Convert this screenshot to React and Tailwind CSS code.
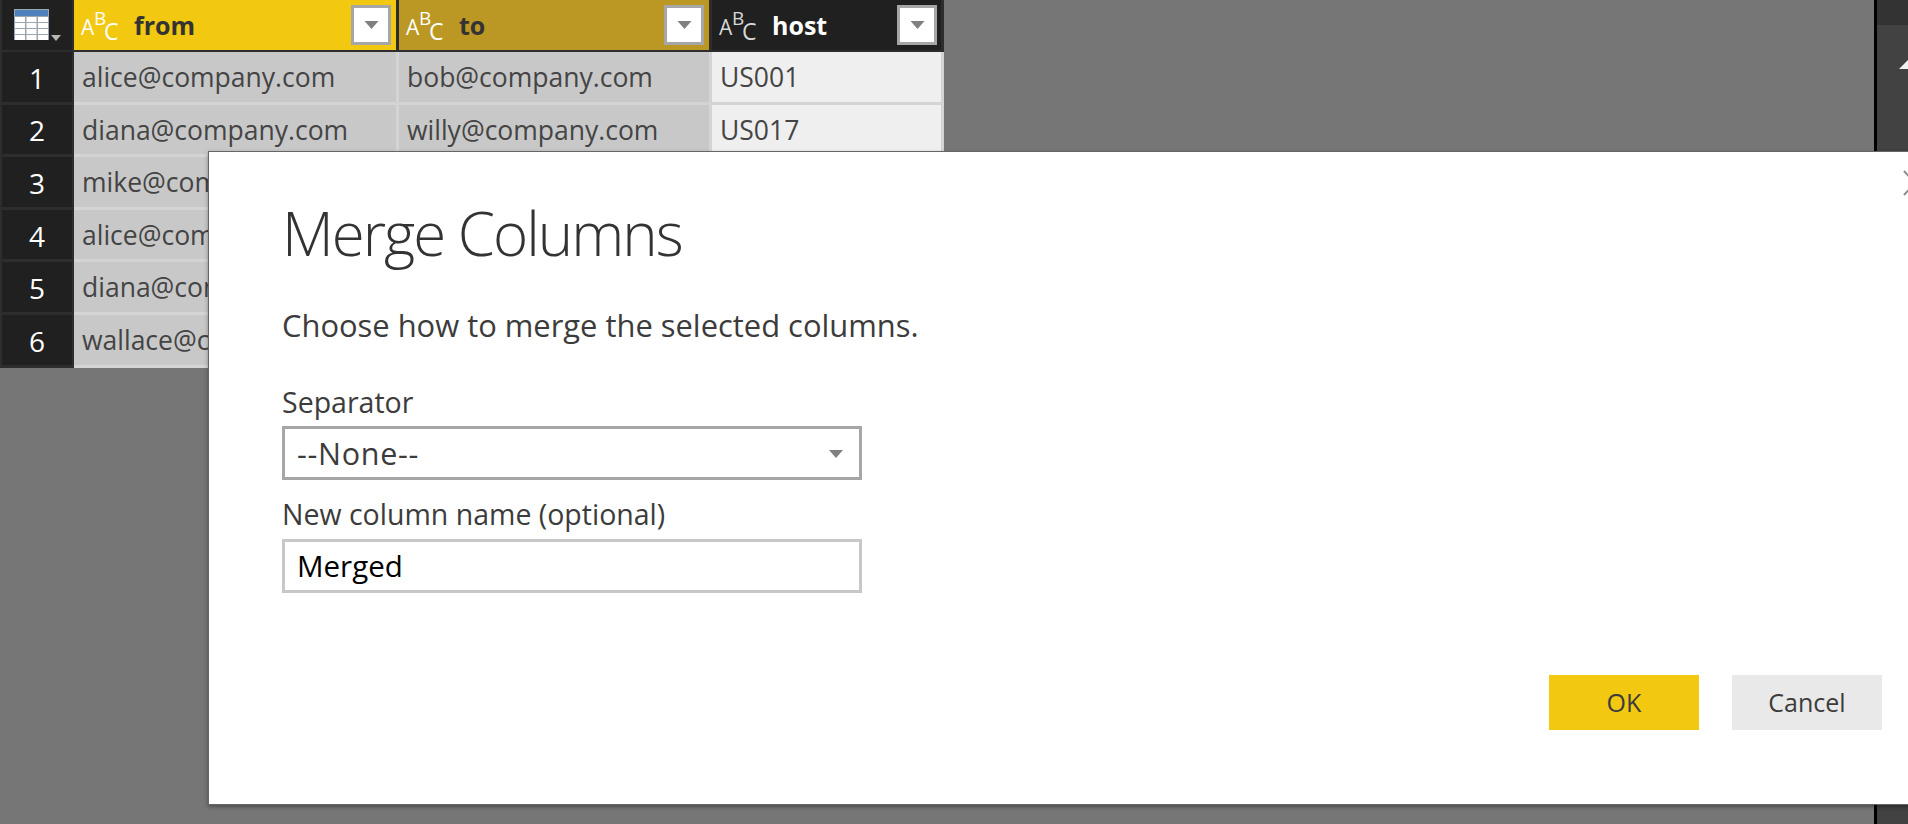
const font = { fontFamily: '"Open Sans","Noto Sans",sans-serif' };

function Caret({ className = "" }) {
  return (
    <svg viewBox="0 0 14 8" className={className} aria-hidden="true">
      <path d="M0 0H14L7 8Z" fill="currentColor" />
    </svg>
  );
}

function TableIcon() {
  return (
    <svg width="50" height="34" viewBox="0 0 50 34" aria-hidden="true">
      <rect x="0" y="0" width="35" height="31" fill="#9aa6b2" />
      <rect x="1" y="1" width="33" height="6" fill="#4f81bd" />
      {[8, 14, 20, 26].map((y) =>
        [1, 12.5, 24].map((x) => <rect key={`${x}-${y}`} x={x} y={y} width="10" height="5" fill="#ffffff" />)
      )}
      <path d="M37 26H47L42 32Z" fill="#b5b5b5" />
    </svg>
  );
}

function TypeIcon({ color }) {
  return (
    <span className={`relative block h-[34px] w-[37px] shrink-0 leading-none ${color}`}>
      <span className="absolute left-0 top-[9px] text-[21px]">A</span>
      <span className="absolute left-[13px] top-[1px] text-[19px]">B</span>
      <span className="absolute left-[23px] top-[12px] text-[23px]">C</span>
    </span>
  );
}

function FilterButton() {
  return (
    <span className="ml-auto flex h-10 w-10 items-center justify-center border-[3px] border-[#a6a6a6] bg-white text-[#808080]">
      <Caret className="h-[8px] w-[15px]" />
    </span>
  );
}

function HeaderCell({ name, bg, text, pr, icon }) {
  return (
    <div className={`flex h-full items-center pl-[7px] ${bg} ${pr}`}>
      <TypeIcon color={icon} />
      <span className={`ml-[16px] text-[25px] font-bold leading-none ${text}`}>{name}</span>
      <FilterButton />
    </div>
  );
}

const rows = [
  ["alice@company.com", "bob@company.com", "US001"],
  ["diana@company.com", "willy@company.com", "US017"],
  ["mike@company.com", "", ""],
  ["alice@company.com", "", ""],
  ["diana@company.com", "", ""],
  ["wallace@company.com", "", ""],
];

function DataTable() {
  return (
    <div className="w-[944px] shrink-0">
      <div className="grid h-[52px] grid-cols-[74px_325px_313px_232px] bg-[#2d2d2d]">
        <div className="flex h-[50px] items-center pl-[2px]">
          <div className="flex h-[50px] w-[70px] items-center bg-[#202020] pl-[12px] pt-[1px]">
            <TableIcon />
          </div>
        </div>
        <div className="h-[50px] pr-[3px]">
          <HeaderCell name="from" bg="bg-[#f2c811]" text="text-[#333333]" pr="pr-[5px]" icon="text-white" />
        </div>
        <div className="h-[50px] pr-[3px]">
          <HeaderCell name="to" bg="bg-[#bb9724]" text="text-[#333333]" pr="pr-[5px]" icon="text-white" />
        </div>
        <div className="h-[50px] pr-[3px]">
          <HeaderCell name="host" bg="bg-[#202020]" text="text-white" pr="pr-[4px]" icon="text-[#d8d8d8]" />
        </div>
      </div>
      {rows.map((r, i) => (
        <div key={i} className="grid h-[52.6px] grid-cols-[74px_325px_313px_232px] text-[26.5px] text-[#444444]">
          <div className="flex items-center justify-center border-x-[2px] border-b-[3px] border-[#2d2d2d] bg-[#202020] pt-[2px] text-[28px] text-white">
            {i + 1}
          </div>
          <div className="flex items-center border-b-[3px] border-r-[3px] border-[#d4d4d4] bg-[#c8c8c8] pl-[8px] pt-[2px]">{r[0]}</div>
          <div className="flex items-center border-b-[3px] border-r-[3px] border-[#d4d4d4] bg-[#c8c8c8] pl-[8px] pt-[2px]">{r[1]}</div>
          <div className="flex items-center border-b-[3px] border-r-[3px] border-[#d4d4d4] bg-[#efefef] pl-[8px] pt-[2px]">{r[2]}</div>
        </div>
      ))}
    </div>
  );
}

function ScrollRail() {
  return (
    <div className="ml-auto flex w-[34px] shrink-0 border-l-[3px] border-black bg-[#424242]">
      <div className="w-full">
        <div className="h-[25px] bg-[#333333]" />
        <div className="flex justify-end pt-[35px]">
          <svg width="9" height="9" viewBox="0 0 9 9" aria-hidden="true">
            <path d="M0 9L9 0V9Z" fill="#f2f2f2" />
          </svg>
        </div>
      </div>
    </div>
  );
}

function MergeDialog() {
  return (
    <div className="absolute left-[208px] top-[151px] flex h-[654px] w-[1720px] flex-col border border-[#666666] bg-white pl-[73px] pr-[45px] text-[#3c3c3c] shadow-[0_2px_4px_rgba(0,0,0,0.35)]">
      <svg width="18" height="28" viewBox="0 0 18 28" className="absolute left-[1694px] top-[18px]" aria-hidden="true">
        <path d="M1 1L12 13L1 25" fill="none" stroke="#8a8a8a" strokeWidth="2" />
      </svg>
      <h1 className="mt-[49px] h-[64px] text-[60px] font-light leading-[64px] tracking-[-2px] text-[#333333]">Merge Columns</h1>
      <p className="mt-[39px] h-[42px] text-[30.9px] leading-[42px]">Choose how to merge the selected columns.</p>
      <label className="mt-[37px] block h-[38px] text-[28.5px] leading-[38px]">Separator</label>
      <div className="mt-[5px] flex h-[54px] w-[580px] items-center border-[3px] border-[#a6a6a6] pl-[12px] pr-[16px] pt-[2px] text-[30.5px] tracking-[0.7px]">
        <span>--None--</span>
        <Caret className="ml-auto h-[8px] w-[14px] text-[#808080]" />
      </div>
      <label className="mt-[15px] block h-[38px] text-[28.5px] leading-[38px]">New column name (optional)</label>
      <div className="mt-[6px] flex h-[54px] w-[580px] items-center border-[3px] border-[#c8c8c8] pl-[12px] text-[29.5px] text-black">
        Merged
      </div>
      <div className="mt-[82px] flex justify-end gap-[33px] text-[25px]">
        <button className="h-[55px] w-[150px] bg-[#f2c811] pt-[1px] text-[#3c3c3c]">OK</button>
        <button className="h-[55px] w-[150px] bg-[#e9e9e9] pt-[1px] text-[#3c3c3c]">Cancel</button>
      </div>
    </div>
  );
}

export default function App() {
  return (
    <div className="relative flex h-[824px] w-[1908px] items-start overflow-hidden bg-[#767676]" style={font}>
      <DataTable />
      <div className="ml-auto flex h-full">
        <ScrollRail />
      </div>
      <MergeDialog />
    </div>
  );
}
